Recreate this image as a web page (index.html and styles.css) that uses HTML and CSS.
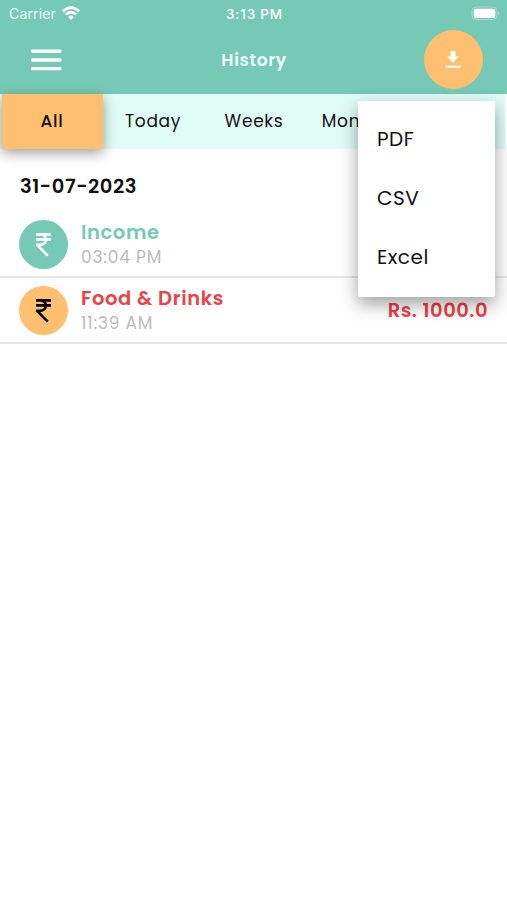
FILE: index.html
```html
<!DOCTYPE html>
<html lang="en">
<head>
<meta charset="utf-8">
<title>History</title>
<link rel="stylesheet" href="styles.css">
</head>
<body>
<header class="header">
  <div class="status">
    <div class="carrier"><span>Carrier</span>
      <svg width="18" height="15" viewBox="0 0 18 15" fill="none" stroke="#fff" stroke-width="2.8"><path d="M.8 5.2Q9-2 17.2 5.2M3.7 8.5Q9 3.9 14.3 8.5"/><path d="M6.2 11Q9 8.2 11.8 11L9 13.9Z" fill="#fff" stroke="none"/></svg>
    </div>
    <span class="clock">3:13 PM</span>
    <svg class="battery" width="29" height="15" viewBox="0 0 29 15"><rect x="1" y="1" width="25" height="12.5" rx="4" fill="none" stroke="#fff" stroke-opacity=".35"/><rect x="2.7" y="2.7" width="21.6" height="9.2" rx="2.2" fill="#fff"/><path d="M27.2 5.3Q29 7.2 27.2 9Z" fill="#fff" fill-opacity=".55"/></svg>
  </div>
  <div class="bar">
    <svg width="32" height="22" viewBox="0 0 32 22" stroke="#fff" stroke-width="3.4" stroke-linecap="round"><path d="M2.5 2.3H30M2.5 11H30M2.5 19.6H30"/></svg>
    <h1 class="title">History</h1>
    <button class="download" aria-label="Download"><svg width="16" height="19" viewBox="0 0 16 19" fill="#fff"><path d="M5.5 1H10.5V6.5H13.7L8 13L2.3 6.5H5.5Z"/><path d="M.5 15.7H15.5V17.8H.5Z"/></svg></button>
  </div>
</header>
<nav class="tabs">
  <span class="tab active">All</span><span class="tab">Today</span><span class="tab">Weeks</span><span class="tab">Months</span>
</nav>
<main>
  <h2 class="date">31-07-2023</h2>
  <div class="row">
    <div class="avatar income"><svg width="17" height="25" viewBox="0 0 17 25" fill="none" stroke="currentColor" stroke-width="2.7"><path d="M1 2.3H16M1 7.3H16M1 2.3H5C12.8 2.3 12.8 12.8 5 12.8H2.2V13L12.7 23.6"/></svg></div>
    <div class="info"><span class="name green">Income</span><span class="time">03:04 PM</span></div>
  </div>
  <div class="row">
    <div class="avatar expense"><svg width="17" height="25" viewBox="0 0 17 25" fill="none" stroke="currentColor" stroke-width="2.7"><path d="M1 2.3H16M1 7.3H16M1 2.3H5C12.8 2.3 12.8 12.8 5 12.8H2.2V13L12.7 23.6"/></svg></div>
    <div class="info"><span class="name red">Food &amp; Drinks</span><span class="time">11:39 AM</span></div>
    <span class="amount red">Rs. 1000.0</span>
  </div>
</main>
<div class="menu"><span>PDF</span><span>CSV</span><span>Excel</span></div>
</body>
</html>
```
FILE: styles.css
```css
* { box-sizing: border-box; }
body {
  margin: 0;
  height: 900px;
  position: relative;
  overflow: hidden;
  background: #fff;
  color: #111;
  font-family: Poppins, Inter, sans-serif;
}
.header { height: 94px; background: #76c9b5; color: #fff; }
.status {
  height: 28px;
  padding: 0 7px 1px 9px;
  display: grid;
  grid-template-columns: 1fr auto 1fr;
  align-items: center;
  font-family: Inter, sans-serif;
  font-size: 13px;
}
.carrier { display: flex; align-items: center; gap: 6px; font-size: 14px; letter-spacing: .15px; color: #e5fff8; }
.clock { font-size: 13.5px; font-weight: 500; letter-spacing: .8px; margin-right: 0; }
.battery { justify-self: end; }
.bar {
  height: 63px;
  padding: 0 24px 0 30px;
  display: grid;
  grid-template-columns: 1fr auto 1fr;
  align-items: center;
}
.title { margin: 0 5px 0 0; font-size: 17px; font-weight: 600; letter-spacing: .65px; color: #effffa; }
.download {
  width: 59px;
  height: 59px;
  padding: 0 1px 0 0;
  border: 0;
  border-radius: 50%;
  justify-self: end;
  display: grid;
  place-items: center;
  background: #ffbf70;
}
.tabs {
  height: 55px;
  margin-right: 2px;
  padding-left: 2px;
  display: grid;
  grid-template-columns: repeat(5, 101px);
  background: #e0fcf6;
  font-size: 17px;
}
.tab { display: grid; place-items: center; padding: 0 1px 2px 0; letter-spacing: .7px; }
.active { background: #ffbf70; font-weight: 500; box-shadow: 0 4px 12px rgba(0, 0, 0, .38); }
.date {
  margin: 0;
  height: 63px;
  padding: 24px 20px 0;
  font-size: 19.5px;
  line-height: 27px;
  font-weight: 600;
  letter-spacing: .55px;
}
.row {
  height: 66px;
  padding: 0 19px;
  display: flex;
  align-items: center;
  border-bottom: 2px solid #e5e5e5;
}
.avatar {
  width: 49px;
  height: 49px;
  margin-right: 13px;
  border-radius: 50%;
  display: grid;
  place-items: center;
}
.income { background: #76c9b5; color: #fff; }
.expense { background: #ffbf70; color: #000; }
.info { display: flex; flex-direction: column; padding-top: 2px; }
.name { font-size: 19.5px; line-height: 25px; font-weight: 600; letter-spacing: .6px; }
.time { font-size: 17px; line-height: 25px; letter-spacing: .8px; color: #bbb; }
.green { color: #76c9b5; }
.red { color: #ed4143; }
.amount { margin-left: auto; font-size: 19.5px; font-weight: 600; letter-spacing: .5px; }
.menu {
  position: absolute;
  left: 358px;
  top: 101px;
  width: 137px;
  height: 196px;
  padding: 9px 20px 11px 19px;
  display: grid;
  grid-template-rows: repeat(3, 1fr);
  align-items: center;
  background: #fff;
  border-radius: 2px;
  font-size: 20px;
  letter-spacing: .5px;
  box-shadow: 0 7px 18px rgba(0, 0, 0, .38);
}
```
